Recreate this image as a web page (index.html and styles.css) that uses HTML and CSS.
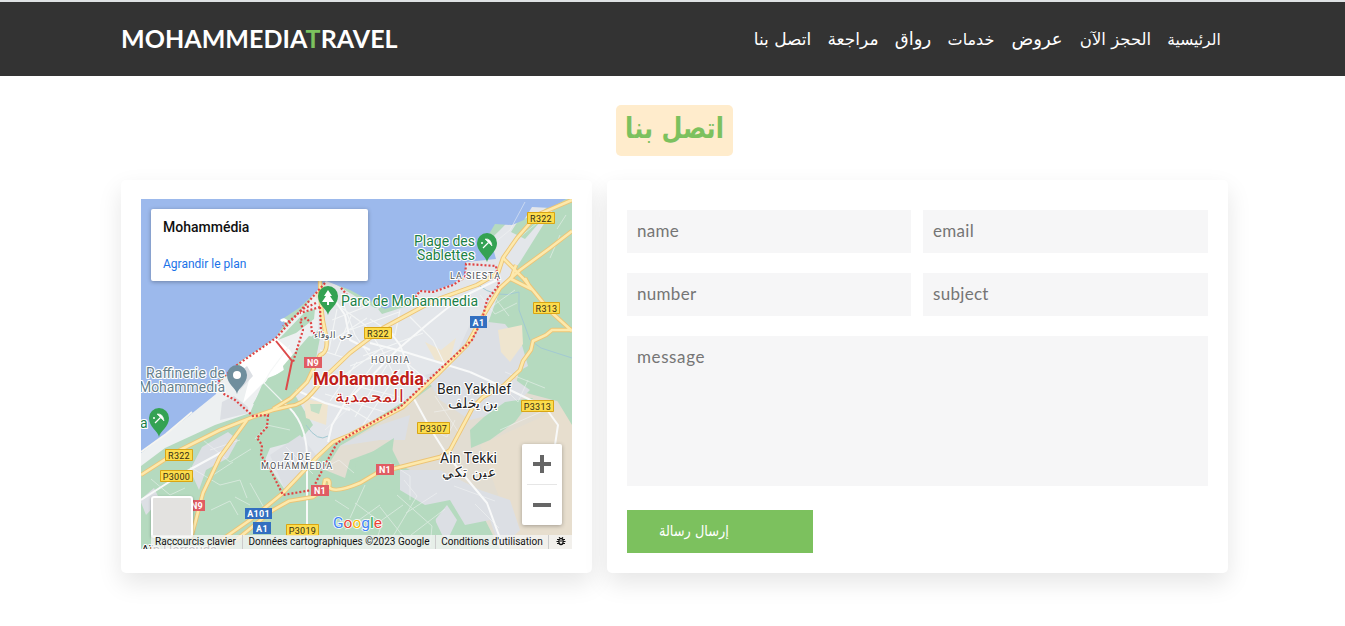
FILE: index.html
```html
<!DOCTYPE html>
<html lang="ar">
<head>
<meta charset="utf-8">
<title>Mohammedia Travel</title>
<link rel="stylesheet" href="styles.css">
</head>
<body>
<header class="header">
  <a class="logo">MOHAMMEDIA<span class="accent">T</span>RAVEL</a>
  <nav class="nav" dir="rtl">
    <a class="home">الرئيسية</a><a class="book">الحجز الآن</a><a class="offers">عروض</a><a class="services">خدمات</a><a class="gallery">رواق</a><a class="review">مراجعة</a><a class="reach">اتصل بنا</a>
  </nav>
</header>
<main class="contact">
  <h1 class="heading"><span class="badge" dir="rtl"><span class="badge-text">اتصل بنا</span></span></h1>
  <div class="row">
    <section class="card map-card">
      <div class="map">
        <svg class="map-art" width="431" height="350" viewBox="141 199 431 350">
          <defs>
            <path id="pin" d="M0 15C-1 9-10 5-10-4a10 10 0 0 1 20 0C10 5 1 9 0 15Z"/>
            <g id="beach" fill="none" stroke="#fff" stroke-width="1.300"><path d="M-2-7Q4-8 5 0Z" fill="#fff" stroke-width=".6"/><path d="M1.500-3.500-4 2"/><circle cx="-5" cy="-3" r="1" fill="#fff" stroke="none"/></g>
          </defs>
          <rect x="141" y="199" width="431" height="350" fill="#b5dabf"/>
          <!-- built-up and bare land -->
          <path fill="#e3e6ea" d="M320 275 375 308 421 290 467 262 500 230 530 199 560 199 545 222 520 262 500 290 480 345 430 385 350 435 330 445 318 460 285 490 265 460 270 448 300 440 313 425 295 395 315 375 318 330 310 300Z"/>
          <path fill="#edf0f1" d="M141 453 190 415 222 380 276 337 320 290 318 330 285 365 262 385 250 413 215 425 165 448 141 466Z"/>
          <path fill="#fff" d="M240 362 276 338 290 350 296 362 262 384 243 403 249 380 240 372Z"/>
          <path fill="#e2ddd2" d="M340 446 400 410 440 380 465 395 485 345 520 365 515 390 572 405 572 549 500 549 475 500 430 480 400 465 390 445 350 460 345 478 325 470Z"/>
          <path fill="#e7dece" d="M480 445 572 403 572 549 508 549 500 500Z"/>
          <g fill="#dcdfe4">
            <path d="M202 447 228 432 238 440 228 458 206 470 199 490 190 470Z"/>
            <path d="M222 402 234 396 248 407 249 413 220 420Z"/>
            <path d="M270 455 300 435 316 455 285 490Z"/>
            <path d="M425 375 450 368 472 320 505 324 522 345 528 366 510 376 530 390 510 410 470 420 440 400Z"/>
            <path d="M340 446 380 425 410 415 405 440 380 440Z"/>
            <path d="M400 470 440 470 480 490 510 500 520 530 500 549 490 520 465 525 450 500 425 505 400 490Z"/>
            <path d="M140 500 154 488 160 500 146 515Z"/>
            <path d="M435 520 447 505 457 520 446 543Z"/>
            <path d="M236 375 247 366 253 376 240 390Z"/>
          </g>
          <g fill="#b5dabf">
            <path d="M278 340 305 312 315 309 314 319 296 333Z"/>
            <path d="M283 366 309 336 320 338 315 363 297 393 286 381Z"/>
            <path d="M268 378 283 372 287 395 270 406 253 404Z"/>
            <path d="M470 430 484 417 505 402 533 398 515 422 490 440 471 448Z"/>
            <path d="M528 387 545 360 572 350 572 425 558 402 552 391Z"/>
            <path d="M355 463 394 438 392 453 377 472 356 482Z"/>
            <path d="M511 232 518 221 540 213 550 205 539 223 525 239Z"/>
            <path d="M365 505 372 490 398 489 410 510 435 505 437 549 330 549Z"/>
            <path d="M378 309 400 296 418 298 404 307 382 314Z"/>
          </g>
          <g fill="#efe5cf">
            <path d="M425 342 441 350 456 338 449 363 435 360Z"/>
            <path d="M303 398 328 404 326 425 306 418Z"/>
            <path d="M498 330 522 325 523 344 510 362 501 352Z"/>
            <path d="M308 286 326 283 324 292 317 299Z"/>
          </g>
          <path fill="#c3dfc6" d="M310 404h12l-3 10-8-3Z"/>
          <!-- sea -->
          <path fill="#9cb9ec" d="M141 199H566L551 208 532 207 524 220 512 225 495 224 489 234 496 259 466 262 465 274 453 284 433 291 420 290 411 300 385 309 350 290 326 281 315 293 299 308 281 320 285 323 276 337 257 350 239 362 230 375 220 378 216 394 190 415 165 435 141 453Z"/>
          <path d="M281 321Q284 318 287 322" fill="none" stroke="#fff" stroke-width="3"/>
          <path d="M141 452 166 434 192 412" fill="none" stroke="#f6f5f0" stroke-width="2"/>
          <path d="M477 284Q496 300 519 292V310L530 340 541 348 572 358M306 425Q318 443 328 436" fill="none" stroke="#a2c9d2"/>
          <!-- streets -->
          <g class="street-main">
            <path d="M497 280 460 298 430 322 397 350 360 388 345 403 332 425 328 442M307 455V549"/>
            <path d="M284 403Q306 420 307 455M296 390 325 403 350 410"/>
            <path d="M370 343 405 352 470 372M385 325 400 345 410 371 421 391"/>
            <path d="M413 397 430 428 447 455 487 503 504 549M470 372 510 390 545 407 558 425 555 445"/>
            <path d="M141 500 180 475 222 452"/>
            <path d="M330 293 345 315 350 340 370 350"/>
          </g>
          <g class="street">
            <path d="M331 300 365 325 382 350 396 379M332 320 370 305M333 340 367 318M342 300 355 335 376 365M350 330 399 312M363 356 423 333M350 366 394 349M343 376 382 348M330 401 357 362M341 408 376 361M355 417 387 365M363 425 400 369M325 394 385 412M331 380 404 398M370 319 395 335 400 310M410 317 433 340 445 365M403 360 427 380M344 405 371 421"/>
            <path d="M320 350 345 358M337 309 329 350M351 316 335 355M290 345 270 372 264 383 284 403"/>
          </g>
          <g class="street lane">
            <path d="M203 440 230 462 251 449M210 450 240 440M190 467 220 485 240 480 247 498M210 477 233 462M211 510 230 501 238 515M255 439 267 425 290 430M286 447 313 474M325 430 350 407"/>
            <path d="M480 295 495 314 517 303M487 310 515 290M492 294 509 316M455 420 447 437 424 426M434 412 465 407M435 396 459 433M500 384 518 402 528 380M505 372 545 388M537 223 514 242M525 202 510 230 483 252"/>
            <path d="M355 503 382 523 375 545M365 485 350 518M375 525 403 505M389 543 417 496 404 480M397 495 432 526 430 547M380 507 410 545M406 513 437 493M411 535 445 509M345 530 380 505M454 486 495 501M390 463 410 476 410 500M475 504 499 528M550 258 560 235M557 229 566 215M500 430 545 410"/>
            <path d="M151 479 170 495 185 488M235 497 250 505M250 483 263 506M328 466 339 460 354 473M335 500 349 509"/>
          </g>
          <!-- highways -->
          <g fill="none">
            <g class="road-edge">
              <path id="r1" d="M572 200 537 215 517 238 503 258 498 273 477 285 433 301 383 328 350 353 328 374 312 393Q302 405 290 406L273 410 253 417 220 430 180 450 141 475"/>
              <path id="r2" d="M320 280Q320 310 325 331T320 355L307 382 291 398 273 409"/>
              <path id="r3" d="M247 420 220 457 203 493 190 542"/>
              <path id="r4" d="M572 231 550 248 520 270 500 288 480 321 467 345 437 375 403 407 350 435 333 442 317 457 283 493 250 520 217 543"/>
              <path id="r5" d="M225 549 273 510 289 501 313 497 323 490 325 480Q331 478 329 487 334 494 360 483L377 473 440 457 450 450 473 407 483 397 503 386 520 370 523 361 531 350 533 341 546 335 552 330 572 330"/>
              <path id="r6" d="M503 258 523 278 550 311 572 331M516 265 511 279 531 289 525 278"/>
            </g>
            <g class="road">
              <use href="#r1"/><use href="#r2"/><use href="#r3"/><use href="#r4"/><use href="#r5"/><use href="#r6"/>
            </g>
          </g>
          <path class="border" d="M325 283 310 300 276 338 237 365 227 374 218 382 222 393 235 400 253 416 268 415 267 427 257 438 262 445 261 455 272 473 283 495 312 490 325 465 337 443 350 435 400 407 437 372 472 340 482 320 487 300 499 285 496 266 466 264 465 277 453 285 433 292 420 291 412 302M341 288 347 295M316 303 303 309 293 318 283 326M320 307 321 333 312 333 311 323 306 318 300 320 303 330 293 362M320 307 300 313"/>
          <path d="M276 341 292 361 286 390" fill="none" stroke="#dc4a4a" stroke-width="2"/>
          <!-- place pins -->
          <use href="#pin" x="328" y="300" fill="#34a253"/><path d="m328 290 4 6h-2l4 6h-5v3h-2v-3h-5l4-6h-2Z" fill="#fff"/>
          <use href="#pin" x="487" y="247" fill="#34a253"/><use href="#beach" x="487" y="246"/>
          <use href="#pin" x="159" y="422" fill="#34a253"/><use href="#beach" x="159" y="421"/>
          <use href="#pin" x="237" y="379" fill="#6f8e9d"/><circle cx="237" cy="375" r="4" fill="#fff"/>
          <!-- place names -->
          <g class="label poi">
            <text x="414" y="246" textLength="61">Plage des</text><text x="417" y="260" textLength="58">Sablettes</text>
            <text x="341" y="306" textLength="137">Parc de Mohammedia</text><text x="140" y="428">a</text>
            <g class="grey"><text x="146" y="378" textLength="79">Raffinerie de</text><text x="139" y="392" textLength="86">Mohammedia</text></g>
          </g>
          <g class="label area">
            <text x="450" y="279" textLength="50">LA SIESTA</text><text x="371" y="363" textLength="38">HOURIA</text>
            <text x="284" y="460" textLength="26">ZI DE</text><text x="261" y="469" textLength="71">MOHAMMEDIA</text>
            <text x="314" y="338" textLength="39">حي الوفاء</text>
          </g>
          <g class="label town">
            <text x="437" y="394" textLength="74">Ben Yakhlef</text><text x="448" y="408" textLength="50">بن يخلف</text>
            <text x="440" y="463" textLength="57">Ain Tekki</text><text x="442" y="477" textLength="54">عين تكي</text>
            <text x="141" y="554" class="faded">Aïn Harrouda</text>
          </g>
          <g class="label city"><text x="313" y="385" textLength="111">Mohammédia</text><text x="335" y="402" textLength="69" class="city-ar">المحمدية</text></g>
          <!-- road shields -->
          <path fill="#fcdc4c" stroke="#d9a514" d="M527.500 212.500h27v11h-27zM533.500 302.500h26v11h-26zM364.500 327.500h27v11h-27zM165.500 449.500h27v11h-27zM160.500 470.500h32v11h-32zM417.500 422.500h32v11h-32zM521.500 400.500h32v11h-32zM286.500 524.500h32v11h-32z"/>
          <path fill="#e05c63" d="M304 357h18v11h-18zM376 464h18v11h-18zM311 485h18v11h-18zM188 500h17v11h-17z"/>
          <path fill="#336fc0" d="M470 316h17v12h-17zM245 508h27v11h-27zM253 522h18v12h-18z"/>
          <g class="shield">
            <text x="541" y="221.500">R322</text><text x="546.500" y="311.500">R313</text><text x="378" y="336.500">R322</text><text x="179" y="458.500">R322</text>
            <text x="176.500" y="479.500">P3000</text><text x="433.500" y="431.500">P3307</text><text x="537.500" y="409.500">P3313</text><text x="302.500" y="533.500">P3019</text>
            <g fill="#fff"><text x="313" y="366">N9</text><text x="385" y="473">N1</text><text x="320" y="494">N1</text><text x="197" y="509">N9</text><text x="478.500" y="325.500">A1</text><text x="258.500" y="517">A101</text><text x="262" y="531.500">A1</text></g>
          </g>
          <text x="333" y="528" class="google"><tspan fill="#4285f4">G</tspan><tspan fill="#ea4335">o</tspan><tspan fill="#fbbc04">o</tspan><tspan fill="#4285f4">g</tspan><tspan fill="#34a853">l</tspan><tspan fill="#ea4335">e</tspan></text>
        </svg>
        <div class="place-card"><strong>Mohammédia</strong><a>Agrandir le plan</a></div>
        <div class="layer-button"></div>
        <div class="zoom-control"><span class="plus"></span><i></i><span class="minus"></span></div>
        <div class="map-footer">
          <span class="f1">Raccourcis clavier</span><span class="f2">Données cartographiques ©2023 Google</span><span class="f3">Conditions d'utilisation</span>
          <span class="f4"><svg width="10" height="10" viewBox="0 0 10 10" fill="none" stroke="#111"><rect x="3" y="2.500" width="4" height="6" rx="2" stroke-width="1.300"/><path d="M3 3.500H1M7 3.500h2M3 5.500H.5M7 5.500h2.500M3 7.500H1M7 7.500h2M4 2.500 3 1M6 2.500 7 1M4 5h2"/></svg></span>
        </div>
      </div>
    </section>
    <form class="card form">
      <div class="fields">
        <input type="text" placeholder="name"><input type="text" placeholder="email">
        <input type="text" placeholder="number"><input type="text" placeholder="subject">
      </div>
      <textarea placeholder="message"></textarea>
      <button type="button" class="send"><span>إرسال رسالة</span></button>
    </form>
  </div>
</main>
</body>
</html>
```
FILE: styles.css
```css
* { box-sizing: border-box; margin: 0; padding: 0; }
body { background: #fff; font-family: Lato, "DejaVu Sans", sans-serif; overflow: hidden; height: 626px; }
.header { height: 76px; border-top: 2px solid #dfe2e4; background: #333; display: flex; justify-content: space-between; align-items: center; padding: 0 125px 2px 121px; color: #fff; }
.logo { font-size: 25px; font-weight: 700; letter-spacing: .05px; white-space: nowrap; }
.accent { color: #7cc15e; }
.nav { display: flex; align-items: baseline; gap: 17px; font: 17px "DejaVu Sans", sans-serif; white-space: nowrap; }
.nav a { display: flex; justify-content: center; }
.nav .home { width: 52px; font-size: 15.5px; }
.nav .book { width: 71px; font-size: 16.500px; }
.nav .offers { width: 52px; font-size: 18px; }
.nav .services { width: 46px; font-size: 16px; }
.nav .gallery { width: 36px; font-size: 18px; }
.nav .review { width: 50px; }
.nav .reach { width: 57px; }
.contact { padding: 29px 117px 0 121px; }
.heading { height: 51px; margin-bottom: 24px; display: flex; justify-content: center; font: 700 29px/46px "DejaVu Sans", sans-serif; color: #7cc15e; }
.badge { width: 117px; height: 51px; border-radius: 5px; background: #ffeccc; display: flex; justify-content: center; white-space: nowrap; }
.badge-text { transform: scaleX(.83); }
.row { display: flex; gap: 15px; height: 393px; }
.card { background: #fff; border-radius: 5px; box-shadow: 0 10px 25px rgba(0, 0, 0, .1); }
.map-card { width: 471px; padding: 19px 20px 24px; }
.map { position: relative; width: 431px; height: 350px; overflow: hidden; font-family: Roboto, sans-serif; }
.map-art { display: block; }
.street-main { fill: none; stroke: #f8f9f9; stroke-width: 2; stroke-linejoin: round; }
.street { fill: none; stroke: #f5f7f7; stroke-width: 1.2; opacity: .9; }
.lane { stroke-width: 1; opacity: .5; }
.road-edge { stroke: #ecc476; stroke-width: 4.4; stroke-linejoin: round; }
.road use { stroke: #fde9ac; stroke-width: 2.6; }
.road-edge path { stroke: inherit; stroke-width: inherit; }
.road path { stroke: inherit; }
.border { fill: none; stroke: #e04343; stroke-width: 2.2; stroke-dasharray: 2 2; }
.label { paint-order: stroke; stroke: #fff; stroke-width: 2.2px; stroke-linejoin: round; }
.poi { font-size: 14px; fill: #1b8047; }
.grey { fill: #667f8d; }
.area { font-size: 9px; fill: #4c5156; }
.town { font-size: 14px; fill: #222; }
.faded { font-size: 13px; }
.city { font-size: 18px; font-weight: 700; fill: #c01f1a; }
.city-ar { font-size: 17px; font-weight: 400; }
.shield { font: 9px Roboto, sans-serif; letter-spacing: .3px; text-anchor: middle; fill: #332d16; }
.shield g { font-weight: 700; }
.google { font: 400 15.5px Roboto, sans-serif; paint-order: stroke; stroke: #fff; stroke-width: 1.5px; }
.place-card { position: absolute; left: 10px; top: 10px; width: 217px; height: 72px; border-radius: 2px; background: #fff; box-shadow: 0 1px 4px rgba(0, 0, 0, .3); padding: 10px 12px; display: flex; flex-direction: column; gap: 21px; }
.place-card strong { font-size: 14px; line-height: 16px; font-weight: 500; color: #111; }
.place-card a { font-size: 12px; line-height: 16px; color: #1a73e8; }
.layer-button { position: absolute; left: 10px; top: 297px; width: 42px; height: 42px; border: 2px solid #fff; border-radius: 3px; background: #e3e2e0; box-shadow: 0 1px 3px rgba(0, 0, 0, .3); }
.zoom-control { position: absolute; left: 381px; top: 245px; width: 40px; height: 81px; border-radius: 2px; background: #fff; box-shadow: 0 1px 4px rgba(0, 0, 0, .3); display: flex; flex-direction: column; align-items: center; }
.zoom-control span { height: 40px; width: 18px; background: linear-gradient(#666, #666) center / 18px 4px no-repeat; }
.zoom-control .plus { background: linear-gradient(#666, #666) center / 18px 4px no-repeat, linear-gradient(#666, #666) center / 4px 18px no-repeat; }
.zoom-control i { height: 1px; width: 30px; background: #e6e6e6; }
.map-footer { position: absolute; left: 10px; right: 0; bottom: 0; height: 14px; display: flex; background: rgba(245, 245, 245, .78); font-size: 10px; line-height: 14px; color: #111; white-space: nowrap; }
.map-footer span { border-right: 1px solid #ccc; text-align: center; }
.f1 { width: 92px; padding-right: 2px; }
.f2 { width: 193px; }
.f3 { width: 113px; }
.map-footer .f4 { width: 23px; border: 0; padding-top: 1px; line-height: 12px; }
.form { width: 621px; padding: 30px 20px 20px; display: flex; flex-direction: column; align-items: flex-start; }
.fields { display: grid; grid-template-columns: 284px 285px; gap: 20px 12px; margin-bottom: 20px; }
.form input, .form textarea { border: 0; border-radius: 0; background: #f6f6f7; padding: 0 10px 2px; font: 17px Lato, sans-serif; letter-spacing: .3px; outline: 0; resize: none; height: 43px; }
.form textarea { width: 581px; height: 150px; padding-top: 10px; margin-bottom: 24px; letter-spacing: .6px; }
.form ::placeholder { color: #757575; opacity: 1; }
.send { width: 186px; height: 43px; border: 0; background: #7cc15e; color: #fff; text-align: left; padding: 0 32px 2px; font: 15px "DejaVu Sans", sans-serif; white-space: nowrap; }
.send span { display: inline-block; transform: scaleX(.86); transform-origin: left; }
```
